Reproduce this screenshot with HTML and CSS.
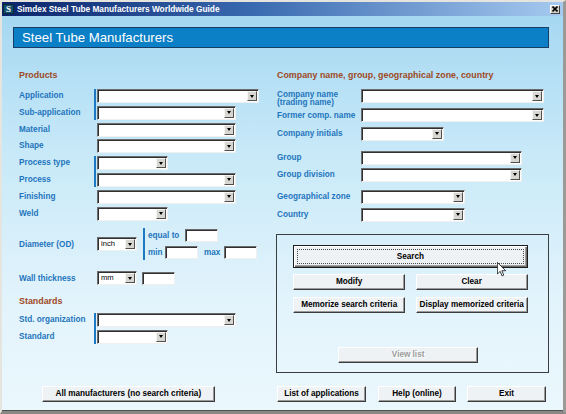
FILE: index.html
```html
<!DOCTYPE html>
<html lang="en">

<head>
    <meta charset="UTF-8" />
    <title>Simdex Steel Tube Manufacturers Worldwide Guide</title>
    <link rel="stylesheet" href="styles.css">
</head>

<body>
    <div class="window">
        <div class="titlebar">
            <span class="app-icon">S</span>
            <span class="title">Simdex Steel Tube Manufacturers Worldwide Guide</span>
            <span class="close-btn">
                <svg width="6" height="6" viewBox="0 0 6 6"><path d="M0.5 0.5 L5.5 5.5 M5.5 0.5 L0.5 5.5" stroke="#000" stroke-width="1.6"/></svg>
            </span>
        </div>

        <div class="client">
            <div class="banner">Steel Tube Manufacturers</div>

            <div class="columns">
                <!-- criteres produit -->
                <div class="col-left">
                    <h2 class="section-title">Products</h2>

                    <div class="group">
                        <div class="labels"><label>Application</label><label>Sub-application</label></div>
                        <div class="fields bar">
                            <div class="combo w-full"><span class="value"></span><span class="arrow"></span></div>
                            <div class="combo w-mid"><span class="value"></span><span class="arrow"></span></div>
                        </div>
                    </div>
                    <div class="group">
                        <div class="labels"><label>Material</label><label>Shape</label></div>
                        <div class="fields">
                            <div class="combo w-mid"><span class="value"></span><span class="arrow"></span></div>
                            <div class="combo w-mid"><span class="value"></span><span class="arrow"></span></div>
                        </div>
                    </div>
                    <div class="group">
                        <div class="labels"><label>Process type</label><label>Process</label></div>
                        <div class="fields bar">
                            <div class="combo w-short"><span class="value"></span><span class="arrow"></span></div>
                            <div class="combo w-mid"><span class="value"></span><span class="arrow"></span></div>
                        </div>
                    </div>
                    <div class="group">
                        <div class="labels"><label>Finishing</label><label>Weld</label></div>
                        <div class="fields">
                            <div class="combo w-mid"><span class="value"></span><span class="arrow"></span></div>
                            <div class="combo w-short"><span class="value"></span><span class="arrow"></span></div>
                        </div>
                    </div>

                    <div class="diam-row">
                        <label class="lbl">Diameter (OD)</label>
                        <div class="fields">
                            <div class="combo w-unit"><span class="value">inch</span><span class="arrow"></span></div>
                        </div>
                        <div class="diam-values">
                            <div class="sub-row">
                                <span class="sub-label eq">equal to</span><span class="input"></span>
                            </div>
                            <div class="sub-row">
                                <span class="sub-label min">min</span><span class="input"></span>
                                <span class="sub-label max">max</span><span class="input"></span>
                            </div>
                        </div>
                    </div>

                    <div class="wall-row">
                        <label class="lbl">Wall thickness</label>
                        <div class="fields">
                            <div class="combo w-unit"><span class="value">mm</span><span class="arrow"></span></div>
                        </div>
                        <span class="input wall-input"></span>
                    </div>

                    <h2 class="section-title standards">Standards</h2>
                    <div class="group std">
                        <div class="labels"><label>Std. organization</label><label>Standard</label></div>
                        <div class="fields bar">
                            <div class="combo w-mid"><span class="value"></span><span class="arrow"></span></div>
                            <div class="combo w-short"><span class="value"></span><span class="arrow"></span></div>
                        </div>
                    </div>
                </div>

                <!-- criteres societe -->
                <div class="col-right">
                    <h2 class="section-title">Company name, group, geographical zone, country</h2>

                    <div class="rrow">
                        <label class="two-lines">Company name<br>(trading name)</label>
                        <div class="combo w-company"><span class="value"></span><span class="arrow"></span></div>
                    </div>
                    <div class="rrow r-former">
                        <label>Former comp. name</label>
                        <div class="combo w-company"><span class="value"></span><span class="arrow"></span></div>
                    </div>
                    <div class="rrow r-initials">
                        <label>Company initials</label>
                        <div class="combo w-initials"><span class="value"></span><span class="arrow"></span></div>
                    </div>
                    <div class="rrow r-group">
                        <label>Group</label>
                        <div class="combo w-group"><span class="value"></span><span class="arrow"></span></div>
                    </div>
                    <div class="rrow r-division">
                        <label>Group division</label>
                        <div class="combo w-group"><span class="value"></span><span class="arrow"></span></div>
                    </div>
                    <div class="rrow r-zone">
                        <label>Geographical zone</label>
                        <div class="combo w-zone"><span class="value"></span><span class="arrow"></span></div>
                    </div>
                    <div class="rrow r-country">
                        <label>Country</label>
                        <div class="combo w-zone"><span class="value"></span><span class="arrow"></span></div>
                    </div>

                    <div class="action-box">
                        <button class="btn btn-default"><span class="focus">Search</span></button>
                        <div class="btn-grid">
                            <button class="btn">Modify</button>
                            <button class="btn">Clear</button>
                            <button class="btn">Memorize search criteria</button>
                            <button class="btn">Display memorized criteria</button>
                        </div>
                        <button class="btn btn-view" disabled>View list</button>
                    </div>
                </div>
            </div>

            <div class="footer">
                <div class="footer-left">
                    <button class="btn btn-all">All manufacturers (no search criteria)</button>
                </div>
                <div class="footer-right">
                    <button class="btn btn-list">List of applications</button>
                    <button class="btn btn-help">Help (online)</button>
                    <button class="btn btn-exit">Exit</button>
                </div>
            </div>
        </div>
    </div>

    <svg class="cursor" width="9" height="15" viewBox="0 0 12 20">
        <path d="M0.5 0.5 L0.5 16 L4.2 12.4 L6.8 18.6 L9 17.6 L6.5 11.6 L11.5 11.6 Z" fill="#fff" stroke="#000" stroke-width="1"/>
    </svg>
</body>

</html>
```

FILE: styles.css
```css
* {
    margin: 0;
    padding: 0;
    box-sizing: border-box;
}

body {
    width: 566px;
    height: 414px;
    overflow: hidden;
    position: relative;
    font-family: 'Liberation Sans', Arial, sans-serif;
    font-size: 8.2px;
    background: #d4d0c8;
}

/* cadre de la fenetre */
.window {
    width: 566px;
    height: 414px;
    display: flex;
    flex-direction: column;
    background: #d4d0c8;
    border-top: 2px solid #e6e4de;
    border-left: 2px solid #e6e4de;
    border-right: 3px solid #9c9a96;
    border-bottom: 3px solid #8a8884;
}

.titlebar {
    height: 14px;
    display: flex;
    align-items: center;
    background: linear-gradient(to right, #0a246a, #3a6ab0 45%, #a6caf0);
    color: #ffffff;
    padding: 0 2px 0 1px;
}

.app-icon {
    width: 11px;
    height: 10px;
    background: #14506e;
    border: 1px solid #0c2a3a;
    color: #ffffff;
    font-family: 'Liberation Serif', serif;
    font-weight: bold;
    font-size: 9px;
    line-height: 8px;
    text-align: center;
}

.title {
    font-weight: bold;
    font-size: 8.3px;
    margin-left: 3px;
    flex: 1;
}

.close-btn {
    width: 10px;
    height: 9px;
    background: #d4d0c8;
    border: 1px solid;
    border-color: #ffffff #404040 #404040 #ffffff;
    display: flex;
    align-items: center;
    justify-content: center;
    margin-right: 1px;
}

.client {
    flex: 1;
    background: linear-gradient(to bottom, #a6d8f2, #c8e9f8 35%, #e4f4fc 75%, #eaf7fd);
    border-bottom: 1px solid #505050;
    padding-left: 17px;
}

.banner {
    margin: 11px 0 0 -6px;
    width: 536px;
    height: 21px;
    background: #0c80c6;
    border: 1px solid #183e66;
    color: #ffffff;
    font-size: 13.2px;
    line-height: 19px;
    padding-left: 8px;
}

.columns {
    display: flex;
    margin-top: 21.5px;
    height: 303.5px;
}

.col-left {
    width: 258px;
}

.col-right {
    width: 272px;
}

.section-title {
    font-size: 8.9px;
    font-weight: bold;
    color: #9e4a26;
    line-height: 11px;
    margin-bottom: 8.5px;
}

label {
    font-weight: bold;
    color: #1f75bd;
    white-space: nowrap;
}

/* groupes de lignes, barre bleue a gauche des champs */
.group {
    display: flex;
    margin-bottom: 2.8px;
}

.labels {
    width: 75px;
    display: flex;
    flex-direction: column;
    gap: 2.8px;
}

.labels label {
    height: 14px;
    line-height: 14px;
}

.fields {
    border-left: 2px solid transparent;
    padding-left: 1px;
    display: flex;
    flex-direction: column;
    gap: 2.8px;
}

.fields.bar {
    border-left-color: #1c78c0;
}

/* liste deroulante facon Windows */
.combo {
    height: 14px;
    display: flex;
    background: #ffffff;
    border: 1px solid;
    border-color: #6c6c6c #f0f0f0 #f0f0f0 #6c6c6c;
    box-shadow: inset 1px 1px 0 #303030;
    padding: 1px 1px 1px 2px;
}

.combo .value {
    flex: 1;
    font-size: 7.6px;
    line-height: 10px;
    padding-left: 1px;
}

.combo .arrow {
    width: 10px;
    background: #d8d6d0;
    border: 1px solid;
    border-color: #f4f4f4 #505050 #505050 #f4f4f4;
    display: flex;
    align-items: center;
    justify-content: center;
}

.combo .arrow::after {
    content: '';
    border-left: 2.5px solid transparent;
    border-right: 2.5px solid transparent;
    border-top: 3px solid #000000;
}

.w-full { width: 162px; }
.w-mid { width: 139px; }
.w-short { width: 71px; }
.w-unit { width: 39.5px; }
.w-company { width: 183.3px; }
.w-initials { width: 83.3px; }
.w-group { width: 161.3px; }
.w-zone { width: 104.3px; }

.input {
    display: block;
    width: 33px;
    height: 13px;
    background: #ffffff;
    border: 1px solid;
    border-color: #6c6c6c #f0f0f0 #f0f0f0 #6c6c6c;
    box-shadow: inset 1px 1px 0 #303030;
}

.lbl {
    width: 75px;
}

.diam-row {
    display: flex;
    align-items: center;
    margin-top: 7.6px;
}

.diam-values {
    margin-left: 6.2px;
    border-left: 2px solid #1c78c0;
    padding: 1px 0 1px 3.3px;
    display: flex;
    flex-direction: column;
    gap: 4px;
}

.sub-row {
    display: flex;
    align-items: center;
    height: 13px;
}

.sub-label {
    font-weight: bold;
    color: #1f75bd;
}

.sub-label.eq { width: 37px; }
.sub-label.min { width: 17px; }
.sub-label.max { width: 20px; margin-left: 6px; }

.wall-row {
    display: flex;
    align-items: center;
    margin-top: 11.2px;
    height: 13.5px;
}

.wall-input {
    margin-left: 5.5px;
}

.section-title.standards {
    margin-top: 10.7px;
    margin-bottom: 6.5px;
}

.group.std .labels,
.group.std .fields {
    gap: 2.5px;
}

/* colonne de droite */
.rrow {
    display: flex;
    align-items: center;
    height: 14px;
}

.rrow label {
    width: 83.7px;
}

.rrow .two-lines {
    align-self: flex-start;
    line-height: 8.4px;
    margin-top: 1.8px;
    height: 14px;
}

.r-former { margin-top: 5px; }
.r-initials { margin-top: 4.7px; }
.r-group { margin-top: 10px; }
.r-division { margin-top: 3.3px; }
.r-zone { margin-top: 8px; }
.r-country { margin-top: 3.7px; }

.action-box {
    margin: 12.3px 0 0 -1px;
    width: 272.5px;
    height: 139px;
    border: 1px solid #3a3e42;
    padding: 10px 20px 0 16.3px;
    display: flex;
    flex-direction: column;
}

/* boutons */
.btn {
    font-family: 'Liberation Sans', Arial, sans-serif;
    font-size: 8.2px;
    font-weight: bold;
    color: #000000;
    background: #eef2f5;
    border: 1px solid;
    border-color: #ffffff #3c3c3c #3c3c3c #ffffff;
    box-shadow: inset -1px -1px 0 #9a9a9a;
    height: 16.3px;
    white-space: nowrap;
}

.btn-default {
    height: 22.7px;
    border: 1px solid #1c1c1c;
    box-shadow: inset 1px 1px 0 #ffffff, inset -1px -1px 0 #6a6a6a, inset -2px -2px 0 #a0a0a0;
    padding: 3px;
}

.btn-default .focus {
    display: flex;
    align-items: center;
    justify-content: center;
    height: 100%;
    border: 1px dotted #4a4a4a;
}

.btn-grid {
    display: grid;
    grid-template-columns: 1fr 1fr;
    column-gap: 10.7px;
    row-gap: 6.7px;
    margin-top: 6.3px;
}

.btn-grid .btn {
    height: 16px;
}

.btn-view {
    width: 140.3px;
    margin: 34px 0 0 44.7px;
    color: #9c9c9c;
    text-shadow: 1px 1px 0 #ffffff;
}

.footer {
    display: flex;
    margin-top: 12.7px;
}

.footer-left {
    width: 258px;
    padding-left: 22.7px;
}

.footer-right {
    display: flex;
}

.footer .btn {
    height: 16.6px;
}

.btn-all { width: 173.3px; }
.btn-list { width: 89px; }
.btn-help { width: 78px; margin-left: 12px; }
.btn-exit { width: 79px; margin-left: 11px; }

.cursor {
    position: absolute;
    left: 497px;
    top: 262px;
}
```
